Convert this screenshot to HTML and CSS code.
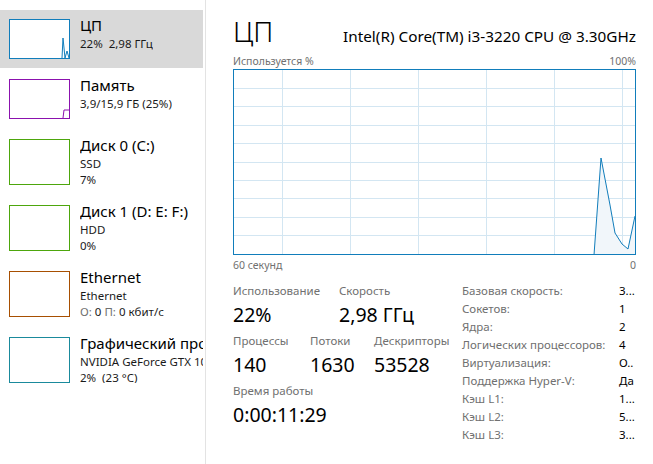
FILE: index.html
```html
<!DOCTYPE html>
<html lang="ru">
<head>
<meta charset="utf-8">
<title>Диспетчер задач — ЦП</title>
<link rel="stylesheet" href="styles.css">
</head>
<body>
<div class="app">
  <nav class="sidebar">
    <div class="item selected">
      <div class="thumb cpu">
        <svg viewBox="0 0 59 38" preserveAspectRatio="none"><polyline points="52,38 53,18 55,38 57,31 59,38" fill="none" stroke="#117dbb" stroke-width="1"/></svg>
      </div>
      <div class="info">
        <div class="title">ЦП</div>
        <div class="sub">22%&nbsp; 2,98 ГГц</div>
      </div>
    </div>
    <div class="item">
      <div class="thumb mem">
        <svg viewBox="0 0 59 38" preserveAspectRatio="none"><polyline points="53,38 54,30 59,30" fill="none" stroke="#8b12ae" stroke-width="1"/></svg>
      </div>
      <div class="info">
        <div class="title">Память</div>
        <div class="sub">3,9/15,9 ГБ (25%)</div>
      </div>
    </div>
    <div class="item tall">
      <div class="thumb disk"></div>
      <div class="info">
        <div class="title">Диск 0 (C:)</div>
        <div class="sub">SSD</div>
        <div class="sub">7%</div>
      </div>
    </div>
    <div class="item tall">
      <div class="thumb disk"></div>
      <div class="info">
        <div class="title">Диск 1 (D: E: F:)</div>
        <div class="sub">HDD</div>
        <div class="sub">0%</div>
      </div>
    </div>
    <div class="item tall">
      <div class="thumb net"></div>
      <div class="info">
        <div class="title">Ethernet</div>
        <div class="sub">Ethernet</div>
        <div class="sub"><span class="dim">О:</span> 0 <span class="dim">П:</span> 0 кбит/с</div>
      </div>
    </div>
    <div class="item tall">
      <div class="thumb gpu"></div>
      <div class="info">
        <div class="title">Графический процессор 0</div>
        <div class="sub">NVIDIA GeForce GTX 1050 Ti</div>
        <div class="sub">2%&nbsp; (23 °C)</div>
      </div>
    </div>
  </nav>

  <main class="main">
    <header class="head">
      <h1 class="heading">ЦП</h1>
      <div class="model">Intel(R) Core(TM) i3-3220 CPU @ 3.30GHz</div>
    </header>
    <div class="axis top">
      <span>Используется %</span>
      <span>100%</span>
    </div>
    <div class="graph">
      <svg viewBox="0 0 401 184" preserveAspectRatio="none">
        <g stroke="#d3e6f2" stroke-width="1">
          <line x1="48.5" y1="0" x2="48.5" y2="184"/>
          <line x1="116.5" y1="0" x2="116.5" y2="184"/>
          <line x1="184.5" y1="0" x2="184.5" y2="184"/>
          <line x1="252.5" y1="0" x2="252.5" y2="184"/>
          <line x1="320.5" y1="0" x2="320.5" y2="184"/>
          <line x1="388.5" y1="0" x2="388.5" y2="184"/>
          <line x1="0" y1="18.5" x2="401" y2="18.5"/>
          <line x1="0" y1="36.5" x2="401" y2="36.5"/>
          <line x1="0" y1="55.5" x2="401" y2="55.5"/>
          <line x1="0" y1="73.5" x2="401" y2="73.5"/>
          <line x1="0" y1="92.5" x2="401" y2="92.5"/>
          <line x1="0" y1="110.5" x2="401" y2="110.5"/>
          <line x1="0" y1="128.5" x2="401" y2="128.5"/>
          <line x1="0" y1="147.5" x2="401" y2="147.5"/>
          <line x1="0" y1="165.5" x2="401" y2="165.5"/>
        </g>
        <polygon points="360,185 367,88 376,135 381,163 388,174 394,179 401,146 401,185" fill="#f1f6fa"/>
        <polyline points="360,185 367,88 376,135 381,163 388,174 394,179 401,146" fill="none" stroke="#117dbb" stroke-width="1"/>
      </svg>
    </div>
    <div class="axis bottom">
      <span>60 секунд</span>
      <span>0</span>
    </div>

    <section class="stats">
      <div class="live">
        <div class="row">
          <div class="stat w-use">
            <div class="label">Использование</div>
            <div class="value">22%</div>
          </div>
          <div class="stat">
            <div class="label">Скорость</div>
            <div class="value">2,98 ГГц</div>
          </div>
        </div>
        <div class="row">
          <div class="stat w-proc">
            <div class="label">Процессы</div>
            <div class="value">140</div>
          </div>
          <div class="stat w-thr">
            <div class="label">Потоки</div>
            <div class="value">1630</div>
          </div>
          <div class="stat">
            <div class="label">Дескрипторы</div>
            <div class="value">53528</div>
          </div>
        </div>
        <div class="row">
          <div class="stat">
            <div class="label">Время работы</div>
            <div class="value">0:00:11:29</div>
          </div>
        </div>
      </div>
      <div class="specs">
        <div class="spec"><span class="k">Базовая скорость:</span><span class="v">3...</span></div>
        <div class="spec"><span class="k">Сокетов:</span><span class="v">1</span></div>
        <div class="spec"><span class="k">Ядра:</span><span class="v">2</span></div>
        <div class="spec"><span class="k">Логических процессоров:</span><span class="v">4</span></div>
        <div class="spec"><span class="k">Виртуализация:</span><span class="v">О..</span></div>
        <div class="spec"><span class="k">Поддержка Hyper-V:</span><span class="v">Да</span></div>
        <div class="spec"><span class="k">Кэш L1:</span><span class="v">1...</span></div>
        <div class="spec"><span class="k">Кэш L2:</span><span class="v">5...</span></div>
        <div class="spec"><span class="k">Кэш L3:</span><span class="v">3...</span></div>
      </div>
    </section>
  </main>
</div>
</body>
</html>
```

FILE: styles.css
```css
* { box-sizing: border-box; }

html, body {
  margin: 0;
  padding: 0;
  background: #fff;
}

body {
  font-family: "Noto Sans", "Open Sans", sans-serif;
  color: #000;
  width: 653px;
  height: 464px;
  overflow: hidden;
}

.app {
  display: flex;
  height: 464px;
}

/* ---------- sidebar ---------- */
.sidebar {
  width: 206px;
  flex: none;
  padding: 10px 2px 0 0;
  border-right: 1px solid #e3e3e3;
  display: flex;
  flex-direction: column;
  gap: 2px;
}

.item {
  display: flex;
  align-items: stretch;
  height: 58px;
  padding: 9px 0 9px 9px;
  gap: 10px;
  overflow: hidden;
}

.item.tall {
  height: 64px;
}

.item.selected {
  background: #d9d9d9;
}

.thumb {
  width: 61px;
  flex: none;
  background: #fff;
  border: 1px solid #117dbb;
}

.thumb svg {
  display: block;
  width: 100%;
  height: 100%;
}

.thumb.mem { border-color: #8b12ae; }
.thumb.disk { border-color: #4da60c; }
.thumb.net { border-color: #a74f01; }
.thumb.gpu { border-color: #1a8a9c; }

.info {
  min-width: 0;
  white-space: nowrap;
  overflow: hidden;
  margin-top: -4px;
}

.title {
  font-size: 15px;
  line-height: 21px;
  color: #000;
}

.sub {
  font-size: 11.5px;
  line-height: 16px;
  color: #1a1a1a;
}

.dim { color: #707070; }

/* ---------- main ---------- */
.main {
  flex: 1;
  min-width: 0;
  padding: 12px 17px 0 27px;
}

.head {
  display: flex;
  justify-content: space-between;
  align-items: baseline;
}

.heading {
  margin: 0;
  font-size: 28px;
  font-weight: 300;
  line-height: 38px;
}

.model {
  font-size: 15.3px;
  white-space: nowrap;
}

.axis {
  display: flex;
  justify-content: space-between;
  font-size: 10.5px;
  color: #707070;
  line-height: 14px;
}

.axis.top { margin-top: 4px; margin-bottom: 1px; }
.axis.bottom { margin-top: 3px; }

.graph {
  height: 186px;
  border: 1px solid #117dbb;
  background: #fff;
}

.graph svg {
  display: block;
  width: 100%;
  height: 100%;
}

/* ---------- stats ---------- */
.stats {
  display: flex;
  margin-top: 11px;
}

.live {
  width: 229px;
  flex: none;
}

.row {
  display: flex;
  margin-bottom: 2px;
}

.stat { flex: none; }
.w-use { width: 106px; }
.w-proc { width: 77px; }
.w-thr { width: 64px; }

.label {
  font-size: 11.5px;
  line-height: 16px;
  color: #707070;
}

.value {
  font-size: 19.5px;
  line-height: 32px;
  color: #000;
}

.specs {
  flex: 1;
  min-width: 0;
  margin-top: -1px;
}

.spec {
  display: flex;
  font-size: 11.5px;
  line-height: 18px;
  white-space: nowrap;
}

.spec .k {
  width: 157px;
  flex: none;
  color: #707070;
}

.spec .v {
  color: #000;
}
```
